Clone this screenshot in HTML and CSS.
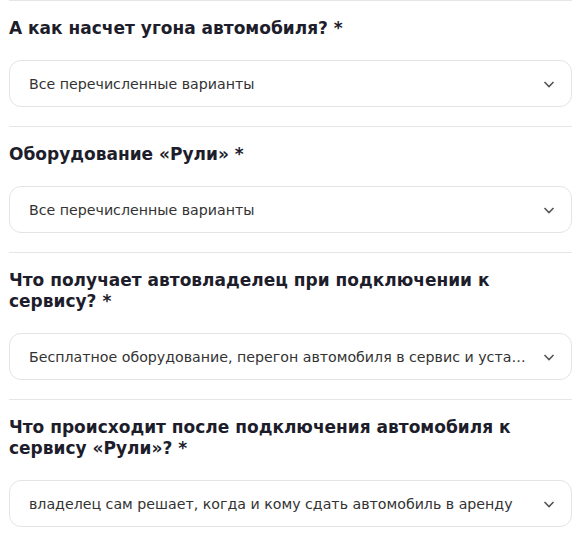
FILE: index.html
```html
<!DOCTYPE html>
<html lang="ru">
<head>
    <meta charset="UTF-8">
    <meta name="viewport" content="width=device-width, initial-scale=1.0">
    <title>Анкета</title>
    <link rel="stylesheet" href="styles.css">
</head>
<body>
    <div class="form">
        <div class="question">
            <h3>А как насчет угона автомобиля? *</h3>
            <div class="select">
                <span class="value">Все перечисленные варианты</span>
                <svg class="arrow" width="14" height="14" viewBox="0 0 14 14"><path d="M2.5 5l4.5 4.5 4.5-4.5" /></svg>
            </div>
        </div>

        <div class="question">
            <h3>Оборудование «Рули» *</h3>
            <div class="select">
                <span class="value">Все перечисленные варианты</span>
                <svg class="arrow" width="14" height="14" viewBox="0 0 14 14"><path d="M2.5 5l4.5 4.5 4.5-4.5" /></svg>
            </div>
        </div>

        <div class="question">
            <h3>Что получает автовладелец при подключении к сервису? *</h3>
            <div class="select">
                <span class="value">Бесплатное оборудование, перегон автомобиля в сервис и установку оборудования</span>
                <svg class="arrow" width="14" height="14" viewBox="0 0 14 14"><path d="M2.5 5l4.5 4.5 4.5-4.5" /></svg>
            </div>
        </div>

        <div class="question">
            <h3>Что происходит после подключения автомобиля к сервису «Рули»? *</h3>
            <div class="select">
                <span class="value">владелец сам решает, когда и кому сдать автомобиль в аренду</span>
                <svg class="arrow" width="14" height="14" viewBox="0 0 14 14"><path d="M2.5 5l4.5 4.5 4.5-4.5" /></svg>
            </div>
        </div>
    </div>
</body>
</html>
```

FILE: styles.css
```css
body {
    margin: 0;
    background-color: #ffffff;
    font-family: "DejaVu Sans", Arial, sans-serif;
}

.form {
    padding: 0 4px 0 9px;
}

.question {
    border-top: 1px solid #e6e6e6;
    padding: 17px 0 19px;
}

.question h3 {
    margin: 0 0 21px;
    font-size: 17px;
    line-height: 21px;
    font-weight: 700;
    color: #1d1d2b;
}

.select {
    display: flex;
    align-items: center;
    height: 45px;
    padding: 0 15px 0 19px;
    border: 1px solid #e4e4e4;
    border-radius: 12px;
    color: #333333;
}

.select .value {
    flex: 1;
    font-size: 14.2px;
    white-space: nowrap;
    overflow: hidden;
    text-overflow: ellipsis;
    padding-right: 14px;
}

.arrow {
    flex: none;
}

.arrow path {
    fill: none;
    stroke: #555555;
    stroke-width: 1.6;
}
```
